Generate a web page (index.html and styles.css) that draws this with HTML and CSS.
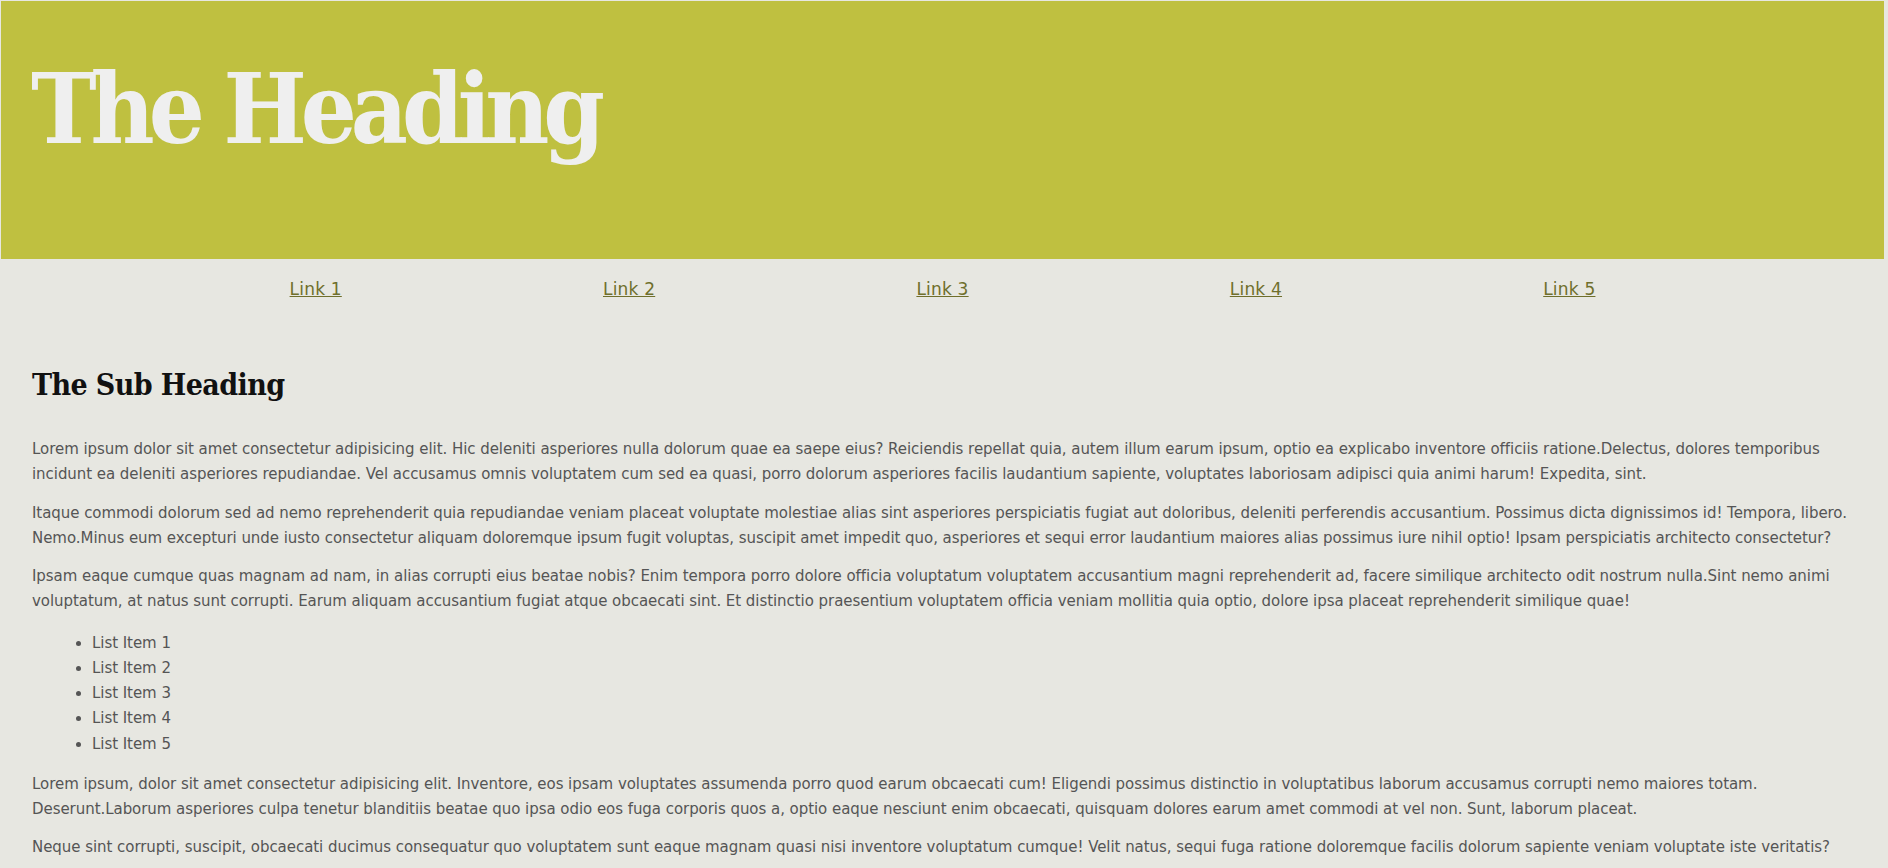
FILE: index.html
```html
<!DOCTYPE html>
<html lang="en">
<head>
<meta charset="utf-8">
<title>The Heading</title>
<link rel="stylesheet" href="styles.css">
</head>
<body>
<div class="page">
  <header class="hero">
    <h1 class="hero-title">The Heading</h1>
  </header>
  <nav class="nav">
    <a class="nav-link" href="#">Link 1</a>
    <a class="nav-link" href="#">Link 2</a>
    <a class="nav-link" href="#">Link 3</a>
    <a class="nav-link" href="#">Link 4</a>
    <a class="nav-link" href="#">Link 5</a>
  </nav>
  <main class="content">
    <h2 class="sub-title">The Sub Heading</h2>
    <p class="text">Lorem ipsum dolor sit amet consectetur adipisicing elit. Hic deleniti asperiores nulla dolorum quae ea saepe eius? Reiciendis repellat quia, autem illum earum ipsum, optio ea explicabo inventore officiis ratione.Delectus, dolores temporibus incidunt ea deleniti asperiores repudiandae. Vel accusamus omnis voluptatem cum sed ea quasi, porro dolorum asperiores facilis laudantium sapiente, voluptates laboriosam adipisci quia animi harum! Expedita, sint.</p>
    <p class="text">Itaque commodi dolorum sed ad nemo reprehenderit quia repudiandae veniam placeat voluptate molestiae alias sint asperiores perspiciatis fugiat aut doloribus, deleniti perferendis accusantium. Possimus dicta dignissimos id! Tempora, libero. Nemo.Minus eum excepturi unde iusto consectetur aliquam doloremque ipsum fugit voluptas, suscipit amet impedit quo, asperiores et sequi error laudantium maiores alias possimus iure nihil optio! Ipsam perspiciatis architecto consectetur?</p>
    <p class="text">Ipsam eaque cumque quas magnam ad nam, in alias corrupti eius beatae nobis? Enim tempora porro dolore officia voluptatum voluptatem accusantium magni reprehenderit ad, facere similique architecto odit nostrum nulla.Sint nemo animi voluptatum, at natus sunt corrupti. Earum aliquam accusantium fugiat atque obcaecati sint. Et distinctio praesentium voluptatem officia veniam mollitia quia optio, dolore ipsa placeat reprehenderit similique quae!</p>
    <ul class="list">
      <li>List Item 1</li>
      <li>List Item 2</li>
      <li>List Item 3</li>
      <li>List Item 4</li>
      <li>List Item 5</li>
    </ul>
    <p class="text">Lorem ipsum, dolor sit amet consectetur adipisicing elit. Inventore, eos ipsam voluptates assumenda porro quod earum obcaecati cum! Eligendi possimus distinctio in voluptatibus laborum accusamus corrupti nemo maiores totam. Deserunt.Laborum asperiores culpa tenetur blanditiis beatae quo ipsa odio eos fuga corporis quos a, optio eaque nesciunt enim obcaecati, quisquam dolores earum amet commodi at vel non. Sunt, laborum placeat.</p>
    <p class="text">Neque sint corrupti, suscipit, obcaecati ducimus consequatur quo voluptatem sunt eaque magnam quasi nisi inventore voluptatum cumque! Velit natus, sequi fuga ratione doloremque facilis dolorum sapiente veniam voluptate iste veritatis?</p>
  </main>
</div>
</body>
</html>
```
FILE: styles.css
```css
html, body {
  margin: 0;
  padding: 0;
  background: #e7e7e1;
}
body {
  font-family: "DejaVu Sans", sans-serif;
  color: #555;
  overflow: hidden;
}
.page {
  margin: 1px 4px 0 1px;
}
.hero {
  background: #bfc040;
  height: 258px;
  padding: 0 30px;
  box-sizing: border-box;
}
.hero-title {
  margin: 0;
  padding-top: 48px;
  font-family: "DejaVu Serif Condensed", "DejaVu Serif", serif;
  font-weight: bold;
  font-size: 98px;
  line-height: 120px;
  color: #efefef;
  letter-spacing: -6px;
}
.nav {
  display: flex;
  padding: 18px 158px 0;
  height: 60px;
  box-sizing: border-box;
}
.nav-link {
  flex: 1;
  text-align: center;
  font-size: 17px;
  line-height: 24px;
  letter-spacing: 0.2px;
  color: #6f6f2c;
}
.content {
  padding: 0 31px;
}
.sub-title {
  margin: 0;
  padding-top: 46px;
  font-family: "DejaVu Serif Condensed", "DejaVu Serif", serif;
  font-weight: bold;
  font-size: 30px;
  line-height: 40px;
  letter-spacing: -0.6px;
  color: #111;
}
.text {
  margin: 0 0 13px;
  font-size: 15px;
  line-height: 25.3px;
  letter-spacing: -0.05px;
}
.sub-title + .text {
  margin-top: 32px;
}
.list {
  margin: 16px 0 15px;
  padding-left: 60px;
  font-size: 15px;
  line-height: 25.2px;
  letter-spacing: -0.05px;
}
```
